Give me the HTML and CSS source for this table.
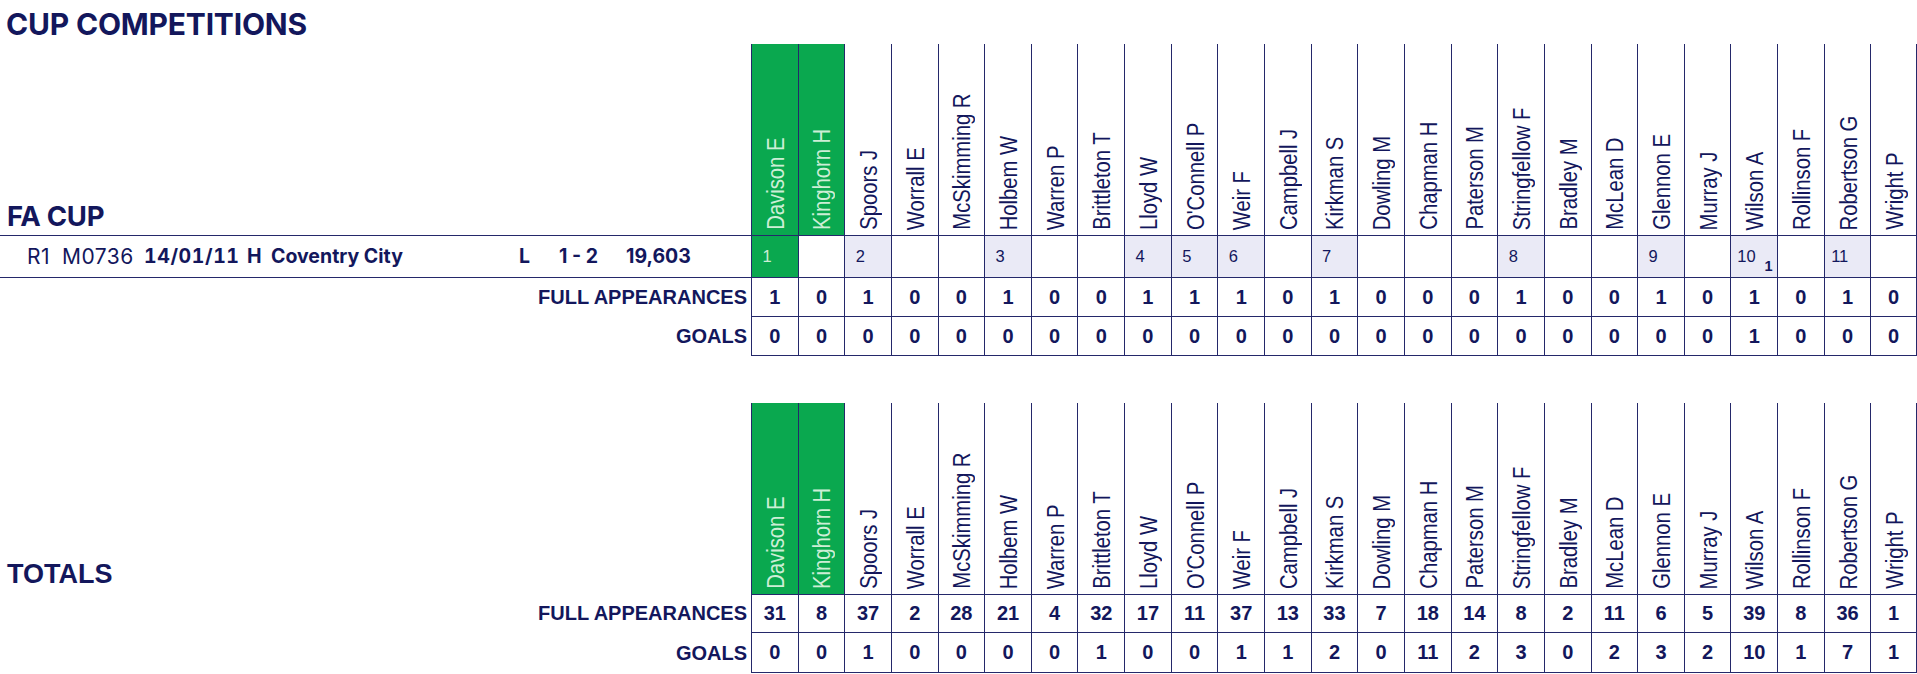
FILE: index.html
```html
<!DOCTYPE html>
<html lang="en">
<head>
<meta charset="utf-8">
<title>Cup Competitions</title>
<link rel="stylesheet" href="styles.css">
</head>
<body>
<h1 class="page-title">CUP COMPETITIONS</h1>

<section class="sheet cup">
  <div class="corner"><h2 class="comp-title">FA CUP</h2></div>
  <div class="hd green"><span class="name"><span class="txt">Davison E</span></span></div>
  <div class="hd green"><span class="name"><span class="txt">Kinghorn H</span></span></div>
  <div class="hd"><span class="name"><span class="txt">Spoors J</span></span></div>
  <div class="hd"><span class="name"><span class="txt">Worrall E</span></span></div>
  <div class="hd"><span class="name"><span class="txt">McSkimming R</span></span></div>
  <div class="hd"><span class="name"><span class="txt">Holbem W</span></span></div>
  <div class="hd"><span class="name"><span class="txt">Warren P</span></span></div>
  <div class="hd"><span class="name"><span class="txt">Brittleton T</span></span></div>
  <div class="hd"><span class="name"><span class="txt">Lloyd W</span></span></div>
  <div class="hd"><span class="name"><span class="txt">O'Connell P</span></span></div>
  <div class="hd"><span class="name"><span class="txt">Weir F</span></span></div>
  <div class="hd"><span class="name"><span class="txt">Campbell J</span></span></div>
  <div class="hd"><span class="name"><span class="txt">Kirkman S</span></span></div>
  <div class="hd"><span class="name"><span class="txt">Dowling M</span></span></div>
  <div class="hd"><span class="name"><span class="txt">Chapman H</span></span></div>
  <div class="hd"><span class="name"><span class="txt">Paterson M</span></span></div>
  <div class="hd"><span class="name"><span class="txt">Stringfellow F</span></span></div>
  <div class="hd"><span class="name"><span class="txt">Bradley M</span></span></div>
  <div class="hd"><span class="name"><span class="txt">McLean D</span></span></div>
  <div class="hd"><span class="name"><span class="txt">Glennon E</span></span></div>
  <div class="hd"><span class="name"><span class="txt">Murray J</span></span></div>
  <div class="hd"><span class="name"><span class="txt">Wilson A</span></span></div>
  <div class="hd"><span class="name"><span class="txt">Rollinson F</span></span></div>
  <div class="hd"><span class="name"><span class="txt">Robertson G</span></span></div>
  <div class="hd last"><span class="name"><span class="txt">Wright P</span></span></div>

  <div class="match-info">
    <span class="f-round">R1</span>
    <span class="f-code">M0736</span>
    <span class="f-date">14/01/11</span>
    <span class="f-venue">H</span>
    <span class="f-opp">Coventry City</span>
    <span class="f-res">L</span>
    <span class="f-score">1 - 2</span>
    <span class="f-att">19,603</span>
  </div>
  <div class="mc green"><span class="no">1</span></div>
  <div class="mc"></div>
  <div class="mc on"><span class="no">2</span></div>
  <div class="mc"></div>
  <div class="mc"></div>
  <div class="mc on"><span class="no">3</span></div>
  <div class="mc"></div>
  <div class="mc"></div>
  <div class="mc on"><span class="no">4</span></div>
  <div class="mc on"><span class="no">5</span></div>
  <div class="mc on"><span class="no">6</span></div>
  <div class="mc"></div>
  <div class="mc on"><span class="no">7</span></div>
  <div class="mc"></div>
  <div class="mc"></div>
  <div class="mc"></div>
  <div class="mc on"><span class="no">8</span></div>
  <div class="mc"></div>
  <div class="mc"></div>
  <div class="mc on"><span class="no">9</span></div>
  <div class="mc"></div>
  <div class="mc on"><span class="no">10</span><span class="gl">1</span></div>
  <div class="mc"></div>
  <div class="mc on"><span class="no">11</span></div>
  <div class="mc last"></div>

  <div class="label">FULL APPEARANCES</div>
  <div class="num">1</div><div class="num">0</div><div class="num">1</div><div class="num">0</div><div class="num">0</div>
  <div class="num">1</div><div class="num">0</div><div class="num">0</div><div class="num">1</div><div class="num">1</div>
  <div class="num">1</div><div class="num">0</div><div class="num">1</div><div class="num">0</div><div class="num">0</div>
  <div class="num">0</div><div class="num">1</div><div class="num">0</div><div class="num">0</div><div class="num">1</div>
  <div class="num">0</div><div class="num">1</div><div class="num">0</div><div class="num">1</div><div class="num last">0</div>

  <div class="label">GOALS</div>
  <div class="num">0</div><div class="num">0</div><div class="num">0</div><div class="num">0</div><div class="num">0</div>
  <div class="num">0</div><div class="num">0</div><div class="num">0</div><div class="num">0</div><div class="num">0</div>
  <div class="num">0</div><div class="num">0</div><div class="num">0</div><div class="num">0</div><div class="num">0</div>
  <div class="num">0</div><div class="num">0</div><div class="num">0</div><div class="num">0</div><div class="num">0</div>
  <div class="num">0</div><div class="num">1</div><div class="num">0</div><div class="num">0</div><div class="num last">0</div>
</section>

<section class="sheet totals">
  <div class="corner"><h2 class="totals-title">TOTALS</h2></div>
  <div class="hd green"><span class="name"><span class="txt">Davison E</span></span></div>
  <div class="hd green"><span class="name"><span class="txt">Kinghorn H</span></span></div>
  <div class="hd"><span class="name"><span class="txt">Spoors J</span></span></div>
  <div class="hd"><span class="name"><span class="txt">Worrall E</span></span></div>
  <div class="hd"><span class="name"><span class="txt">McSkimming R</span></span></div>
  <div class="hd"><span class="name"><span class="txt">Holbem W</span></span></div>
  <div class="hd"><span class="name"><span class="txt">Warren P</span></span></div>
  <div class="hd"><span class="name"><span class="txt">Brittleton T</span></span></div>
  <div class="hd"><span class="name"><span class="txt">Lloyd W</span></span></div>
  <div class="hd"><span class="name"><span class="txt">O'Connell P</span></span></div>
  <div class="hd"><span class="name"><span class="txt">Weir F</span></span></div>
  <div class="hd"><span class="name"><span class="txt">Campbell J</span></span></div>
  <div class="hd"><span class="name"><span class="txt">Kirkman S</span></span></div>
  <div class="hd"><span class="name"><span class="txt">Dowling M</span></span></div>
  <div class="hd"><span class="name"><span class="txt">Chapman H</span></span></div>
  <div class="hd"><span class="name"><span class="txt">Paterson M</span></span></div>
  <div class="hd"><span class="name"><span class="txt">Stringfellow F</span></span></div>
  <div class="hd"><span class="name"><span class="txt">Bradley M</span></span></div>
  <div class="hd"><span class="name"><span class="txt">McLean D</span></span></div>
  <div class="hd"><span class="name"><span class="txt">Glennon E</span></span></div>
  <div class="hd"><span class="name"><span class="txt">Murray J</span></span></div>
  <div class="hd"><span class="name"><span class="txt">Wilson A</span></span></div>
  <div class="hd"><span class="name"><span class="txt">Rollinson F</span></span></div>
  <div class="hd"><span class="name"><span class="txt">Robertson G</span></span></div>
  <div class="hd last"><span class="name"><span class="txt">Wright P</span></span></div>

  <div class="label">FULL APPEARANCES</div>
  <div class="num top">31</div><div class="num top">8</div><div class="num top">37</div><div class="num top">2</div><div class="num top">28</div>
  <div class="num top">21</div><div class="num top">4</div><div class="num top">32</div><div class="num top">17</div><div class="num top">11</div>
  <div class="num top">37</div><div class="num top">13</div><div class="num top">33</div><div class="num top">7</div><div class="num top">18</div>
  <div class="num top">14</div><div class="num top">8</div><div class="num top">2</div><div class="num top">11</div><div class="num top">6</div>
  <div class="num top">5</div><div class="num top">39</div><div class="num top">8</div><div class="num top">36</div><div class="num top last">1</div>

  <div class="label">GOALS</div>
  <div class="num">0</div><div class="num">0</div><div class="num">1</div><div class="num">0</div><div class="num">0</div>
  <div class="num">0</div><div class="num">0</div><div class="num">1</div><div class="num">0</div><div class="num">0</div>
  <div class="num">1</div><div class="num">1</div><div class="num">2</div><div class="num">0</div><div class="num">11</div>
  <div class="num">2</div><div class="num">3</div><div class="num">0</div><div class="num">2</div><div class="num">3</div>
  <div class="num">2</div><div class="num">10</div><div class="num">1</div><div class="num">7</div><div class="num last">1</div>
</section>
</body>
</html>
```

FILE: styles.css
```css
* {
  box-sizing: border-box;
  margin: 0;
  padding: 0;
}

html,
body {
  background: #ffffff;
}

body {
  width: 1917px;
  color: #13175c;
  font-family: "Liberation Sans", Arial, sans-serif;
}

.page-title {
  height: 44px;
  padding: 9px 0 0 6px;
  font: 700 30px/30px Inter, "Liberation Sans", sans-serif;
  letter-spacing: -0.2px;
}

.sheet {
  display: grid;
  grid-template-columns: 751px repeat(25, 1fr);
  grid-template-rows: 191px 43px 39px 39px;
}

.sheet.totals {
  margin-top: 47px;
  grid-template-rows: 191px 39px 40px;
}

.corner {
  display: flex;
  align-items: flex-end;
  padding: 0 0 5px 7px;
}

.comp-title {
  font: 700 27.5px/1 Inter, "Liberation Sans", sans-serif;
  letter-spacing: -0.3px;
}

.totals-title {
  font: 700 27px/1 "Liberation Sans", Arial, sans-serif;
  padding-bottom: 1px;
}

.hd {
  border-left: 1px solid #24286a;
  display: flex;
  justify-content: center;
  align-items: flex-end;
  padding-bottom: 5px;
  padding-left: 3px;
}

.hd .name {
  writing-mode: vertical-rl;
  transform: rotate(180deg);
  font-size: 23px;
  line-height: 1;
  white-space: nowrap;
}

.hd .txt {
  display: inline-block;
  transform: scaleY(0.88);
  transform-origin: 50% 0;
}

.green {
  background: #0aa84f;
  color: #cdeed6;
}

.last {
  border-right: 1px solid #24286a;
}

.match-info {
  border-top: 1px solid #24286a;
  border-bottom: 1px solid #24286a;
  display: grid;
  grid-template-columns: 35px 82px 103px 24px 248px 40px 67px auto;
  align-items: center;
  padding-left: 27px;
  font: 400 19.5px/1 Inter, "Liberation Sans", sans-serif;
  white-space: nowrap;
}

.f-round,
.f-code {
  font-size: 21px;
  letter-spacing: 0.5px;
}

.f-date {
  font-variant-numeric: tabular-nums;
  letter-spacing: 0.6px;
}

.f-date,
.f-venue,
.f-opp,
.f-res,
.f-score,
.f-att {
  font-weight: 700;
}

.mc {
  border-left: 1px solid #24286a;
  border-top: 1px solid #24286a;
  border-bottom: 1px solid #24286a;
  display: flex;
  align-items: center;
}

.mc.on {
  background: #eaeaf6;
}

.mc .no {
  width: 30px;
  text-align: center;
  font-size: 16.5px;
  line-height: 1;
}

.mc .gl {
  width: 14px;
  align-self: flex-end;
  padding-bottom: 4px;
  text-align: center;
  font-size: 14.5px;
  font-weight: 700;
  line-height: 1;
}

.label {
  display: flex;
  align-items: center;
  justify-content: flex-end;
  padding-right: 4px;
  font-size: 20px;
  font-weight: 700;
  white-space: nowrap;
}

.num {
  border-left: 1px solid #24286a;
  border-bottom: 1px solid #24286a;
  display: flex;
  align-items: center;
  justify-content: center;
  font-size: 20px;
  font-weight: 700;
}

.num.top {
  border-top: 1px solid #24286a;
}
```
